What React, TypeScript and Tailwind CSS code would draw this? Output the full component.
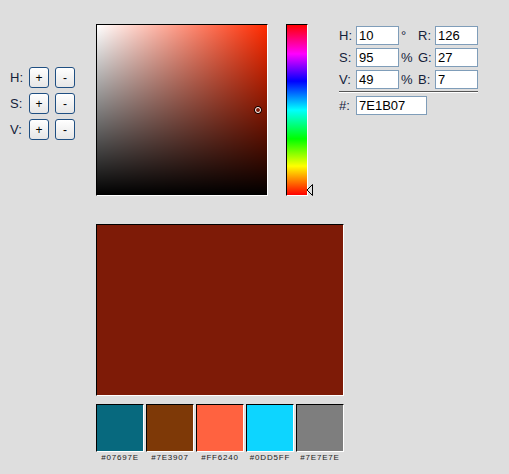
import React from "react";

const SWATCHES = ["#07697E", "#7E3907", "#FF6240", "#0DD5FF", "#7E7E7E"];

const FONT = { fontFamily: '"Liberation Sans", Arial, sans-serif' };

function StepButton({ label }: { label: string }) {
  return (
    <button className="w-[20px] h-[21px] rounded-[3px] border border-[#1f4f82] bg-gradient-to-b from-white to-[#e6e6e6] text-[12px] leading-none text-black flex items-center justify-center">
      {label}
    </button>
  );
}

function Field({ value, wide }: { value: string; wide?: boolean }) {
  return (
    <div
      className={`${wide ? "w-[71px]" : "w-[43px]"} h-[19px] border border-[#7f9db9] bg-white px-[2px] text-[13px] leading-[17px] text-black`}
    >
      {value}
    </div>
  );
}

export default function App() {
  return (
    <div
      className="w-[509px] h-[474px] bg-[#dedede] text-[13px] text-[#14213a] overflow-hidden"
      style={FONT}
    >
      <div className="flex pt-[24px]">
        {/* step buttons */}
        <div className="w-[96px] pl-[10px] pt-[43px] flex flex-col gap-[5px]">
          {["H:", "S:", "V:"].map((l) => (
            <div key={l} className="flex items-center h-[21px]">
              <span className="w-[19px]">{l}</span>
              <StepButton label="+" />
              <span className="w-[6px]" />
              <StepButton label="-" />
            </div>
          ))}
        </div>

        {/* saturation / value box */}
        <div className="relative w-[172px] h-[172px] border border-t-black border-l-black border-r-white border-b-white bg-[#ff2a00]">
          <div className="absolute inset-0 bg-gradient-to-r from-white to-transparent" />
          <div className="absolute inset-0 bg-gradient-to-b from-transparent to-black" />
          <div className="absolute left-[157px] top-[81px] w-[8px] h-[8px] rounded-full border-[1.5px] border-black">
            <div className="w-full h-full rounded-full border border-white" />
          </div>
        </div>

        {/* hue bar */}
        <div className="relative ml-[18px] w-[22px] h-[172px]">
          <div className="w-full h-full border border-t-black border-l-black border-r-white border-b-white bg-[linear-gradient(to_bottom,#ff0000_0%,#ff00ff_17%,#0000ff_33%,#00ffff_50%,#00ff00_67%,#ffff00_83%,#ff0000_100%)]" />
          <svg className="absolute left-[20px] top-[160px]" width="8" height="12" viewBox="0 0 8 12">
            <path d="M6.5 0.5 L1 6 L6.5 11.5 Z" fill="#dedede" stroke="black" strokeWidth="1" />
          </svg>
        </div>

        {/* numeric fields */}
        <div className="ml-[31px] pt-[2px] flex flex-col">
          <div className="flex flex-col gap-[3px]">
            {[
              ["H:", "10", "°", "R:", "126"],
              ["S:", "95", "%", "G:", "27"],
              ["V:", "49", "%", "B:", "7"],
            ].map(([a, v1, u, b, v2]) => (
              <div key={a} className="flex items-center h-[19px]">
                <span className="w-[17px]">{a}</span>
                <Field value={v1} />
                <span className="w-[19px] pl-[2px]">{u}</span>
                <span className="w-[17px]">{b}</span>
                <Field value={v2} />
              </div>
            ))}
          </div>
          <div className="mt-[2px] w-[139px] border-t border-t-[#555] border-b border-b-white" />
          <div className="mt-[3px] flex items-center h-[19px]">
            <span className="w-[17px]">#:</span>
            <Field value="7E1B07" wide />
          </div>
        </div>
      </div>

      {/* preview and swatches */}
      <div className="ml-[96px] mt-[28px] w-[248px]">
        <div className="h-[172px] border border-t-black border-l-black border-r-white border-b-white bg-[#7E1B07]" />
        <div className="mt-[8px] flex gap-[2px]">
          {SWATCHES.map((c) => (
            <div key={c} className="w-[48px] flex flex-col items-center">
              <div
                className="w-[48px] h-[48px] border border-t-black border-l-black border-r-white border-b-white"
                style={{ backgroundColor: c }}
              />
              <span className="mt-[1px] text-[8px] leading-[10px] tracking-[0.8px] text-[#222]">{c}</span>
            </div>
          ))}
        </div>
      </div>
    </div>
  );
}
